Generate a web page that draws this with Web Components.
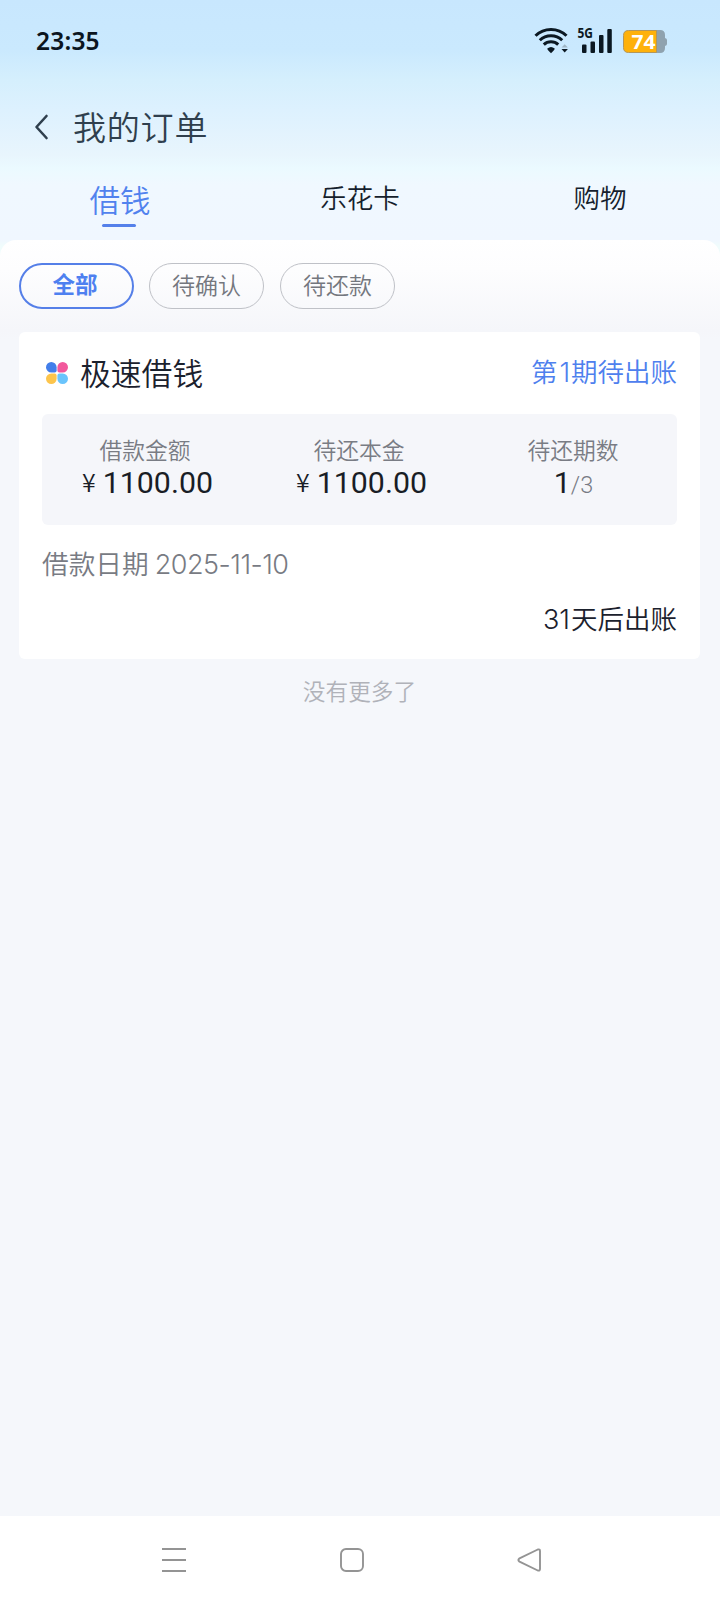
<!DOCTYPE html>
<html lang="zh-CN">
<head>
<meta charset="utf-8">
<title>我的订单</title>
<style>
html,body{margin:0;padding:0}
body{width:720px;height:1604px;overflow:hidden;background:#f5f7fb;font-family:"Noto Sans CJK SC","Noto Sans",sans-serif;font-weight:350;color:#1b212d}
</style>
</head>
<body>
<orders-app></orders-app>
<script>
const define = (name, html) => {
  const tpl = document.createElement('template');
  tpl.innerHTML = html;
  customElements.define(name, class extends HTMLElement {
    constructor() {
      super();
      this.attachShadow({ mode: 'open' }).append(tpl.content.cloneNode(true));
    }
  });
};

define('status-bar', `
<style>
:host{display:flex;height:82px;box-sizing:border-box;padding:0 53px 0 36px;align-items:center;justify-content:space-between;color:#0b1520}
.time{font:600 24.5px/34px "Noto Sans",sans-serif;letter-spacing:.2px}
svg{display:block}
</style>
<span class="time">23:35</span>
<svg width="136" height="34" viewBox="531 24 136 34">
  <g fill="none" stroke="#0b1822" stroke-width="3">
    <path d="M535.5 35.8a22 22 0 0 1 31 0"/>
    <path d="M539.8 40.2a16 16 0 0 1 22.4 0"/>
    <path d="M543.8 44.6a10.4 10.4 0 0 1 14.4 0"/>
  </g>
  <path d="M547.3 48.6a5.600 5.600 0 0 1 7.4 0Q555 49.500 551 53.3Q547 49.500 547.3 48.6z" fill="#0b1822"/>
  <path d="M561.5 47.5l3.2-3.2 3.2 3.2z" fill="#9fb6c5"/>
  <path d="M561.5 49l3.2 3.6 3.2-3.6z" fill="#0b1822"/>
  <text x="577.5" y="38.400" font-family="Noto Sans" font-weight="700" font-size="13.5" textLength="15.5" lengthAdjust="spacingAndGlyphs" fill="#0b1822">5G</text>
  <g fill="#0b1822"><rect x="582" y="44.5" width="4.5" height="8.5" rx="1"/><rect x="590.5" y="41.5" width="4.5" height="11.5" rx="1"/><rect x="599" y="35" width="4.5" height="18" rx="1"/><rect x="607.3" y="29" width="4.5" height="24" rx="1"/></g>
  <path d="M630 30h30q5 0 5 5v3q2 .5 2 2v4q0 1.500-2 2v2q0 5-5 5h-30z" fill="#8fa2af"/>
  <path d="M656.500 30.500h-28q-5 0-5 5v12q0 5 5 5h28z" fill="#feb10b" stroke="#b3965a" stroke-width="1"/>
  <text x="631.500" y="49" font-family="Noto Sans" font-weight="700" font-size="20" textLength="24" lengthAdjust="spacingAndGlyphs" fill="#fff">74</text>
</svg>`);

define('title-bar', `
<style>
:host{display:flex;height:90px;box-sizing:border-box;padding:0 0 1px 34px;align-items:center;color:#2f3f4d}
svg{display:block;width:15px;height:26px;margin-right:24px}
h1{margin:0;font-size:33px;font-weight:inherit;line-height:46px;padding-bottom:2px;letter-spacing:.8px}
</style>
<svg viewBox="0 0 15 26" fill="none" stroke="#2f3f4d" stroke-width="2.6" stroke-linecap="round" stroke-linejoin="round"><path d="M12.500 2L2.500 13l10 11"/></svg>
<h1><slot></slot></h1>`);

define('main-tab', `
<style>
:host{display:flex;flex-direction:column;align-items:center;flex:1 1 0;font-size:26.500px;color:#151e2d}
span{line-height:50px}
i{display:none;width:34px;height:3px;border-radius:2px;background:#5480ea;margin:-2px 2px 0 0}
:host([active]){color:#5082ee;font-size:30.500px}
:host([active]) span{line-height:54px}
:host([active]) i{display:block}
</style>
<span><slot></slot></span><i></i>`);

define('filter-pill', `
<style>
:host{display:block;width:115px;height:46px;box-sizing:border-box;border:1px solid #bfc1c7;border-radius:23px;text-align:center;line-height:41px;font-size:23px;color:#74777e}
:host([active]){border:2px solid #557fe8;line-height:37px;color:#4e80f0;font-weight:700;font-size:22.500px;padding-right:3px}
</style>
<slot></slot>`);

define('info-cell', `
<style>
:host{display:flex;flex-direction:column;align-items:center;color:#191d26}
.label{font-size:22.800px;line-height:32px;color:#797c84;padding-right:1px}
.value{font:400 30.300px/34px Roboto,sans-serif;white-space:nowrap}
</style>
<div class="label"><slot name="label"></slot></div>
<div class="value"><slot></slot></div>`);

define('loan-card', `
<style>
:host{display:block;height:327px;box-sizing:border-box;margin:0 20px 0 19px;padding:0 23px;background:#fff;border-radius:6px}
header{display:flex;align-items:center;height:82px}
header svg{width:22px;height:22px;margin:-1px 12px 0 4px}
h2{flex:1;margin:0;font-size:30.800px;line-height:46px;font-weight:inherit;padding-bottom:3px}
.state{font-size:26.500px;line-height:40px;color:#4e80ee;padding-bottom:3px}
.state .num{margin:0 1.500px 0 2px}
.grid{display:grid;grid-template-columns:repeat(3,1fr);column-gap:7px;height:111px;box-sizing:border-box;padding-top:20px;background:#f5f6fa;border-radius:6px}
.cur{font:350 25px/30px "Noto Sans CJK SC",sans-serif;margin:0 7px 0 4px;position:relative;top:-1px}
.total{font-size:23.500px;font-weight:300;color:#777b84}
.date{font-size:26.700px;line-height:40px;margin-top:18px;color:#787b83;white-space:pre}
.num{font-family:Inter,"Noto Sans",sans-serif;font-weight:300;font-size:27px;letter-spacing:-.6px}
.date .num{letter-spacing:-.500px}
.due{font-size:26.500px;line-height:40px;margin-top:13px;text-align:right}
.due .num{letter-spacing:0;margin-right:1px;font-weight:350}
</style>
<header>
<svg viewBox="0 0 22 22"><path d="M5.300 0a5.300 5.300 0 0 1 5.300 5.300V8.600q0 2-2 2H5.300A5.300 5.300 0 0 1 5.300 0z" fill="#427eea"/><path d="M16.700 0a5.300 5.300 0 0 0-5.300 5.300V8.600q0 2 2 2h3.300A5.300 5.300 0 0 0 16.700 0z" fill="#f2589c"/><path d="M5.300 22a5.300 5.300 0 0 0 5.300-5.300V13.400q0-2-2-2H5.300A5.300 5.300 0 0 0 5.300 22z" fill="#fdc54c"/><path d="M16.700 22a5.300 5.300 0 0 1-5.300-5.300V13.400q0-2 2-2h3.300A5.300 5.300 0 0 1 16.700 22z" fill="#6ac4fc"/></svg>
<h2>极速借钱</h2><span class="state">第<span class="num">1</span>期待出账</span>
</header>
<div class="grid">
<info-cell><span slot="label">借款金额</span><span class="cur">¥</span>1100.00</info-cell>
<info-cell><span slot="label">待还本金</span><span class="cur">¥</span>1100.00</info-cell>
<info-cell><span slot="label">待还期数</span>1<span class="total">/3</span></info-cell>
</div>
<div class="date">借款日期 <span class="num">2025-11-10</span></div>
<div class="due"><span class="num">31</span>天后出账</div>`);

define('nav-bar', `
<style>
:host{display:flex;height:88px;background:#fff;align-items:center;padding:0 178px 0 161px;justify-content:space-between}
svg{width:26px;height:26px;fill:none;stroke:#949494;stroke-width:1.900;stroke-linejoin:round}
</style>
<svg viewBox="0 0 26 26"><path d="M1 2h24M1 13h24M1 24h24"/></svg>
<svg viewBox="0 0 26 26"><rect x="2" y="2" width="22" height="22" rx="5"/></svg>
<svg viewBox="0 0 26 26"><path d="M21.800 2.500L3.500 11.400Q1.200 13 3.500 14.600L21.800 23.500Q24 24 24 22V4Q24 2 21.800 2.500z"/></svg>`);

define('orders-app', `
<style>
:host{display:flex;flex-direction:column;width:720px;height:1604px}
.top{height:256px;background:linear-gradient(#c8e7fe 0,#cae9fe 50px,#d5effd 80px,#ddf1fe 110px,#e8f5fd 155px,#ebfaff 168px,#f0f8ff 185px,#f0f7ff 240px,#f0fcfc 246px)}
nav{display:flex}
main{flex:1;margin-top:-16px;border-radius:16px 16px 0 0;background:linear-gradient(#fff 0,#fdfdfe 30px,#f5f6fa 90px,#f5f7fb 100px)}
.filters{display:flex;gap:15px;padding:23px 19px}
.filters :last-child{margin-left:1px}
.end{text-align:center;font-size:22.700px;line-height:32px;color:#b0b2b9;margin-top:16px;padding-right:1px}
</style>
<div class="top">
<status-bar></status-bar>
<title-bar>我的订单</title-bar>
<nav><main-tab active>借钱</main-tab><main-tab>乐花卡</main-tab><main-tab>购物</main-tab></nav>
</div>
<main>
<div class="filters"><filter-pill active>全部</filter-pill><filter-pill>待确认</filter-pill><filter-pill>待还款</filter-pill></div>
<loan-card></loan-card>
<div class="end">没有更多了</div>
</main>
<nav-bar></nav-bar>`);
</script>
</body>
</html>
